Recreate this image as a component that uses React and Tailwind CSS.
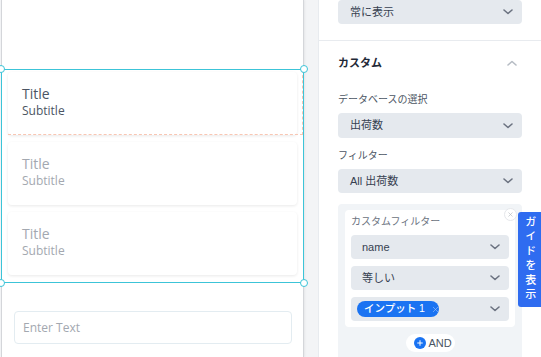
import { Plus, X } from "lucide-react";

const jp = "font-['Liberation_Sans','Noto_Sans_CJK_JP',sans-serif]";

function Chevron({ up = false, className = "" }) {
  return (
    <svg width="10" height="6" viewBox="0 0 10 6" className={className} fill="none">
      <path
        d={up ? "M1 5 L5 1.5 L9 5" : "M1 1 L5 4.5 L9 1"}
        stroke="currentColor"
        strokeWidth="1.6"
        strokeLinecap="round"
        strokeLinejoin="round"
      />
    </svg>
  );
}

function Select({ children, className = "", pad = "pl-[12px]" }) {
  return (
    <div
      className={`flex items-center justify-between rounded-[4px] bg-[#e5e9ee] pr-[9px] text-[11px] text-[#374151] ${pad} ${className}`}
    >
      <div className="flex items-center">{children}</div>
      <Chevron className="text-[#6b7280]" />
    </div>
  );
}

function Card({ faded = false }) {
  return (
    <div className="h-[63px] rounded-[4px] bg-white pl-[14px] pt-[13px] shadow-[0_1px_3px_rgba(0,0,0,0.09)]">
      <div className={`text-[14px] leading-[18px] ${faded ? "text-[#a3a8b0]" : "text-[#4b5563]"}`}>Title</div>
      <div className={`text-[12px] leading-[16px] ${faded ? "text-[#a3a8b0]" : "text-[#4b5563]"}`}>Subtitle</div>
    </div>
  );
}

function Handle({ className }) {
  return <div className={`absolute h-[8px] w-[8px] rounded-full border border-[#3cc4d8] bg-white ${className}`} />;
}

export default function App() {
  return (
    <div className={`flex h-[357px] w-[541px] overflow-hidden bg-[#f3f4f6] ${jp}`}>
      {/* canvas */}
      <div className="ml-[1px] h-full w-[303px] shrink-0 border-l border-r border-[#d4d6da] bg-white font-['Open_Sans',sans-serif] shadow-[1px_0_2px_rgba(0,0,0,0.06)]">
        <div className="h-[70px]" />
        <div className="relative h-[212px]">
          <div className="flex flex-col gap-[7px] px-[6px] pt-[2px]">
            <Card />
            <Card faded />
            <Card faded />
          </div>
          <div className="pointer-events-none absolute left-[6px] right-0 top-0 h-[65px] border-b border-r border-dashed border-[#f8c6b3]" />
          <div className="pointer-events-none absolute -bottom-px -left-px -right-px -top-px border border-[#3cc4d8]" />
          <Handle className="-left-[5px] -top-[5px]" />
          <Handle className="-right-[5px] -top-[5px]" />
          <Handle className="-bottom-[5px] -left-[5px]" />
          <Handle className="-bottom-[5px] -right-[5px]" />
        </div>
        <div className="ml-[12px] mr-[11px] mt-[29px] flex h-[33px] items-center rounded-[4px] border border-[#e3ecf1] pl-[8px] text-[12px] text-[#a3a8b0]">
          Enter Text
        </div>
      </div>

      {/* right panel */}
      <div className="relative ml-[14px] h-full flex-1 border-l border-[#e8ebef] bg-white">
        <div className="border-b border-[#e8ebef] px-[19px] pb-[16px]">
          <Select className="h-[24px]">常に表示</Select>
        </div>
        <div className="px-[19px]">
          <div className="mt-[15px] flex h-[14px] items-center justify-between pr-[5px]">
            <span className="text-[11px] font-bold text-[#1f2937]">カスタム</span>
            <Chevron up className="text-[#b6bcc4]" />
          </div>
          <div className="mt-[23px] text-[10px] leading-[14px] text-[#4b5563]">データベースの選択</div>
          <Select className="mt-[6px] h-[25px]">出荷数</Select>
          <div className="mt-[11px] text-[10px] leading-[14px] text-[#4b5563]">フィルター</div>
          <Select className="mt-[6px] h-[24px]">All 出荷数</Select>

          <div className="mt-[11px] rounded-[4px] bg-[#f1f4f7] px-[7px] pb-[10px] pt-[6px]">
            <div className="relative rounded-[4px] bg-white px-[6px] pb-[6px] pt-[5px]">
              <div className="text-[10px] leading-[14px] text-[#6b7280]">カスタムフィルター</div>
              <Select className="mt-[6px] h-[24px]" pad="pl-[11px]">name</Select>
              <Select className="mt-[7px] h-[24px]" pad="pl-[11px]">等しい</Select>
              <Select className="mt-[7px] h-[24px]" pad="pl-[6px]">
                <span className="flex h-[16px] w-[82px] items-center whitespace-nowrap rounded-full bg-[#1a73f2] pl-[7px] text-[10.5px] font-medium text-white">
                  インプット 1
                  <X size={9} strokeWidth={1.5} className="ml-[6px] shrink-0 text-[#a9c9fb]" />
                </span>
              </Select>
              <div className="absolute -right-[2px] -top-[2px] flex h-[13px] w-[13px] items-center justify-center rounded-full border border-[#e5e7eb] bg-white">
                <X size={7} strokeWidth={2} className="text-[#b0b5bc]" />
              </div>
            </div>
            <div className="mt-[7px] flex justify-center">
              <div className="flex h-[18px] w-[49px] items-center gap-[3px] rounded-full bg-white pl-[8px] text-[11px] text-[#4b5563]">
                <span className="flex h-[12px] w-[12px] items-center justify-center rounded-full bg-[#1a73f2]">
                  <Plus size={8} strokeWidth={3} className="text-white" />
                </span>
                AND
              </div>
            </div>
          </div>
        </div>

        <div className="absolute right-0 top-[212px] flex h-[95px] w-[23px] items-center justify-center rounded-l-[3px] bg-[#2f6cf0] text-[11px] font-medium tracking-[3.5px] text-white [writing-mode:vertical-rl]">
          ガイドを表示
        </div>
      </div>
    </div>
  );
}
